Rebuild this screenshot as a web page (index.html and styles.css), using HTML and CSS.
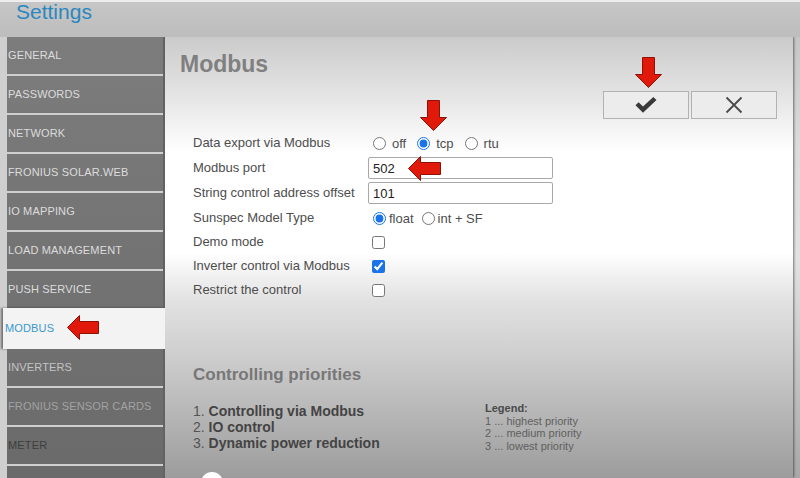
FILE: index.html
```html
<!DOCTYPE html>
<html lang="en">
<head>
<meta charset="utf-8">
<title>Settings - Modbus</title>
<link rel="stylesheet" href="styles.css">
</head>
<body>
<div class="app">
  <header class="topbar"><h1 class="title">Settings</h1></header>
  <div class="main">
    <nav class="sidebar">
      <a class="nav-item">GENERAL</a>
      <a class="nav-item">PASSWORDS</a>
      <a class="nav-item">NETWORK</a>
      <a class="nav-item">FRONIUS SOLAR.WEB</a>
      <a class="nav-item">IO MAPPING</a>
      <a class="nav-item">LOAD MANAGEMENT</a>
      <a class="nav-item">PUSH SERVICE</a>
      <a class="nav-item nav-item--active">MODBUS</a>
      <a class="nav-item nav-item--dim">INVERTERS</a>
      <a class="nav-item nav-item--faded">FRONIUS SENSOR CARDS</a>
      <a class="nav-item nav-item--dark">METER</a>
      <a class="nav-item"></a>
    </nav>
    <section class="panel">
      <h2 class="panel-title">Modbus</h2>
      <div class="actions">
        <button class="btn" type="button" aria-label="Save">
          <svg width="22" height="16" viewBox="0 0 22 16"><path d="M0.5 8.2 L3.6 5.2 L8 9.6 L18.3 0 L21.5 3.1 L8 15.8 Z" fill="#3a3a3a"/></svg>
        </button>
        <button class="btn" type="button" aria-label="Cancel">
          <svg width="18" height="18" viewBox="0 0 18 18"><path d="M1.5 1.5 L16.5 16.5 M16.5 1.5 L1.5 16.5" stroke="#4a4a4a" stroke-width="1.8" fill="none"/></svg>
        </button>
      </div>
      <form class="form">
        <div class="label">Data export via Modbus</div>
        <div class="control">
          <label class="opt"><input type="radio" name="exp"><span>off</span></label>
          <label class="opt"><input type="radio" name="exp" checked><span>tcp</span></label>
          <label class="opt"><input type="radio" name="exp"><span>rtu</span></label>
        </div>
        <div class="label">Modbus port</div>
        <div class="control"><input class="text" type="text" value="502"></div>
        <div class="label">String control address offset</div>
        <div class="control"><input class="text" type="text" value="101"></div>
        <div class="label">Sunspec Model Type</div>
        <div class="control">
          <label class="opt opt--tight"><input type="radio" name="ss" checked><span>float</span></label>
          <label class="opt opt--tight"><input type="radio" name="ss"><span>int + SF</span></label>
        </div>
        <div class="label">Demo mode</div>
        <div class="control"><input class="check" type="checkbox"></div>
        <div class="label">Inverter control via Modbus</div>
        <div class="control"><input class="check" type="checkbox" checked></div>
        <div class="label">Restrict the control</div>
        <div class="control"><input class="check" type="checkbox"></div>
      </form>
      <h3 class="sub-title">Controlling priorities</h3>
      <div class="priorities">
        <ol class="prio-list">
          <li><b>Controlling via Modbus</b></li>
          <li><b>IO control</b></li>
          <li><b>Dynamic power reduction</b></li>
        </ol>
        <div class="legend">
          <div class="legend-title">Legend:</div>
          <div>1 ... highest priority</div>
          <div>2 ... medium priority</div>
          <div>3 ... lowest priority</div>
        </div>
      </div>
    </section>
  </div>

  <svg class="arrow arrow--save" width="27" height="31" viewBox="0 0 27 31"><path d="M7.5 0.5 H19.5 V17.5 H26.5 L13.5 30.5 L0.5 17.5 H7.5 Z" fill="#e1190b" stroke="#8e1006" stroke-width="1"/></svg>
  <svg class="arrow arrow--tcp" width="27" height="31" viewBox="0 0 27 31"><path d="M7.5 0.5 H19.5 V17.5 H26.5 L13.5 30.5 L0.5 17.5 H7.5 Z" fill="#e1190b" stroke="#8e1006" stroke-width="1"/></svg>
  <svg class="arrow arrow--port" width="33" height="25" viewBox="0 0 33 25"><path d="M0.5 12.5 L12.5 0.5 V6.5 H32.5 V18.5 H12.5 V24.5 Z" fill="#e1190b" stroke="#8e1006" stroke-width="1"/></svg>
  <svg class="arrow arrow--nav" width="32" height="25" viewBox="0 0 32 25"><path d="M0.5 12.5 L12.5 0.5 V6.5 H31.5 V18.5 H12.5 V24.5 Z" fill="#e1190b" stroke="#8e1006" stroke-width="1"/></svg>
  <div class="scrub-dot"></div>
</div>
</body>
</html>
```

FILE: styles.css
```css
* { box-sizing: border-box; }

html, body {
  margin: 0;
  padding: 0;
  width: 800px;
  height: 478px;
  overflow: hidden;
}

body {
  font-family: "Liberation Sans", Arial, sans-serif;
  background: linear-gradient(#c4c4c4 0, #c6c6c6 37px, #dcdcdc 150px, #e2e2e2 260px, #a8a8a8 478px);
}

.app {
  position: relative;
  width: 800px;
  height: 478px;
  overflow: hidden;
}

.topbar {
  height: 37px;
  padding-left: 16px;
  border-top: 2px solid #ededed;
  background: linear-gradient(#c6c6c6, #bdbdbd);
}

.title {
  margin: 0;
  margin-top: -2px;
  font-size: 21px;
  line-height: 24px;
  font-weight: normal;
  color: #2b87bf;
}

.main {
  display: flex;
  height: 441px;
  overflow: hidden;
}

.sidebar {
  width: 163px;
  flex: none;
  padding: 0 0 0 7px;
  background: #cfcfcf;
  position: relative;
  z-index: 2;
}

.nav-item {
  display: flex;
  align-items: center;
  height: 37px;
  margin-bottom: 2px;
  padding-left: 1px;
  padding-bottom: 1px;
  font-size: 11px;
  letter-spacing: 0.15px;
  color: #dcdcdc;
  white-space: nowrap;
  background: linear-gradient(#7e7e7e, #6a6a6a) fixed;
}

.nav-item--active {
  margin: -2px -2px 0 -4px;
  height: 41px;
  padding-left: 2px;
  color: #3a98cf;
  background: #f3f3f3;
  box-shadow: -2px 0 2px rgba(0, 0, 0, 0.45);
}

.nav-item--dim { color: #c4c4c4; }
.nav-item--faded { color: #a2a2a2; }
.nav-item--dark { color: #3e3e3e; }

.panel {
  flex: 1;
  margin-right: 7px;
  padding: 12.5px 16px 0 15px;
  border-left: 2px solid #626262;
  box-shadow: 0 -1px 3px rgba(0, 0, 0, 0.5), 1px 0 2px rgba(0, 0, 0, 0.25);
  background: linear-gradient(#cbcbcb 0, #e4e4e4 58px, #f8f8f8 100px, #ffffff 116px, #ffffff 216px, #e2e2e2 263px, #d0d0d0 313px, #bcbcbc 363px, #9c9c9c 441px);
  position: relative;
  z-index: 1;
}

.panel-title {
  margin: 0;
  font-size: 23px;
  line-height: 28px;
  font-weight: bold;
  color: #808080;
}

.actions {
  display: flex;
  justify-content: flex-end;
  gap: 2px;
  margin-top: 13.5px;
}

.btn {
  width: 86px;
  height: 28px;
  margin: 0;
  padding: 0;
  display: flex;
  align-items: center;
  justify-content: center;
  border: 1px solid #b2b2b2;
  background: #ececec;
  border-radius: 0;
}

.form {
  display: grid;
  grid-template-columns: 175px 1fr;
  grid-template-rows: repeat(4, 25px) repeat(3, 24px);
  align-items: center;
  margin: 11.5px 0 0 13px;
  font-size: 13px;
  color: #4d4d4d;
}

.label {
  line-height: 15px;
  padding-bottom: 2px;
  white-space: nowrap;
}

.control {
  display: flex;
  align-items: center;
}

.opt {
  display: inline-flex;
  align-items: center;
  gap: 6px;
  margin-right: 6px;
  color: #4d4d4d;
}

.opt--tight {
  gap: 3px;
  margin-right: 3px;
}

input[type="radio"] {
  width: 13px;
  height: 13px;
  margin: 0 0 0 5px;
  accent-color: #1a73e8;
}

.check {
  width: 13px;
  height: 13px;
  margin: 0 0 0 4px;
  accent-color: #1a73e8;
}

.text {
  width: 185px;
  height: 22px;
  padding: 0 4px;
  border: 1px solid #a8a8a8;
  border-radius: 2px;
  background: #ffffff;
  font-family: "Liberation Sans", Arial, sans-serif;
  font-size: 13px;
  color: #222222;
}

.sub-title {
  margin: 62px 0 0 13px;
  font-size: 17px;
  line-height: 20px;
  font-weight: bold;
  color: #777777;
}

.priorities {
  display: flex;
  margin: 18.5px 0 0 13px;
}

.prio-list {
  width: 292px;
  margin: 0;
  padding: 0;
  list-style: none;
  counter-reset: prio;
  font-size: 14px;
  line-height: 16px;
  color: #555555;
}

.prio-list li {
  counter-increment: prio;
}

.prio-list li::before {
  content: counter(prio) ". ";
}

.prio-list b {
  color: #444444;
}

.legend {
  margin-top: -1px;
  font-size: 11px;
  line-height: 12.5px;
  letter-spacing: 0;
  color: #606060;
}

.legend-title {
  font-weight: bold;
  color: #4a4a4a;
}

.arrow {
  position: absolute;
  z-index: 5;
}

.arrow--save { left: 635px; top: 57px; }
.arrow--tcp { left: 420px; top: 100px; }
.arrow--port { left: 408px; top: 156px; }
.arrow--nav { left: 67px; top: 315px; }

.scrub-dot {
  position: absolute;
  left: 201px;
  top: 472px;
  width: 22px;
  height: 22px;
  border-radius: 50%;
  background: #ffffff;
  z-index: 5;
}
```
